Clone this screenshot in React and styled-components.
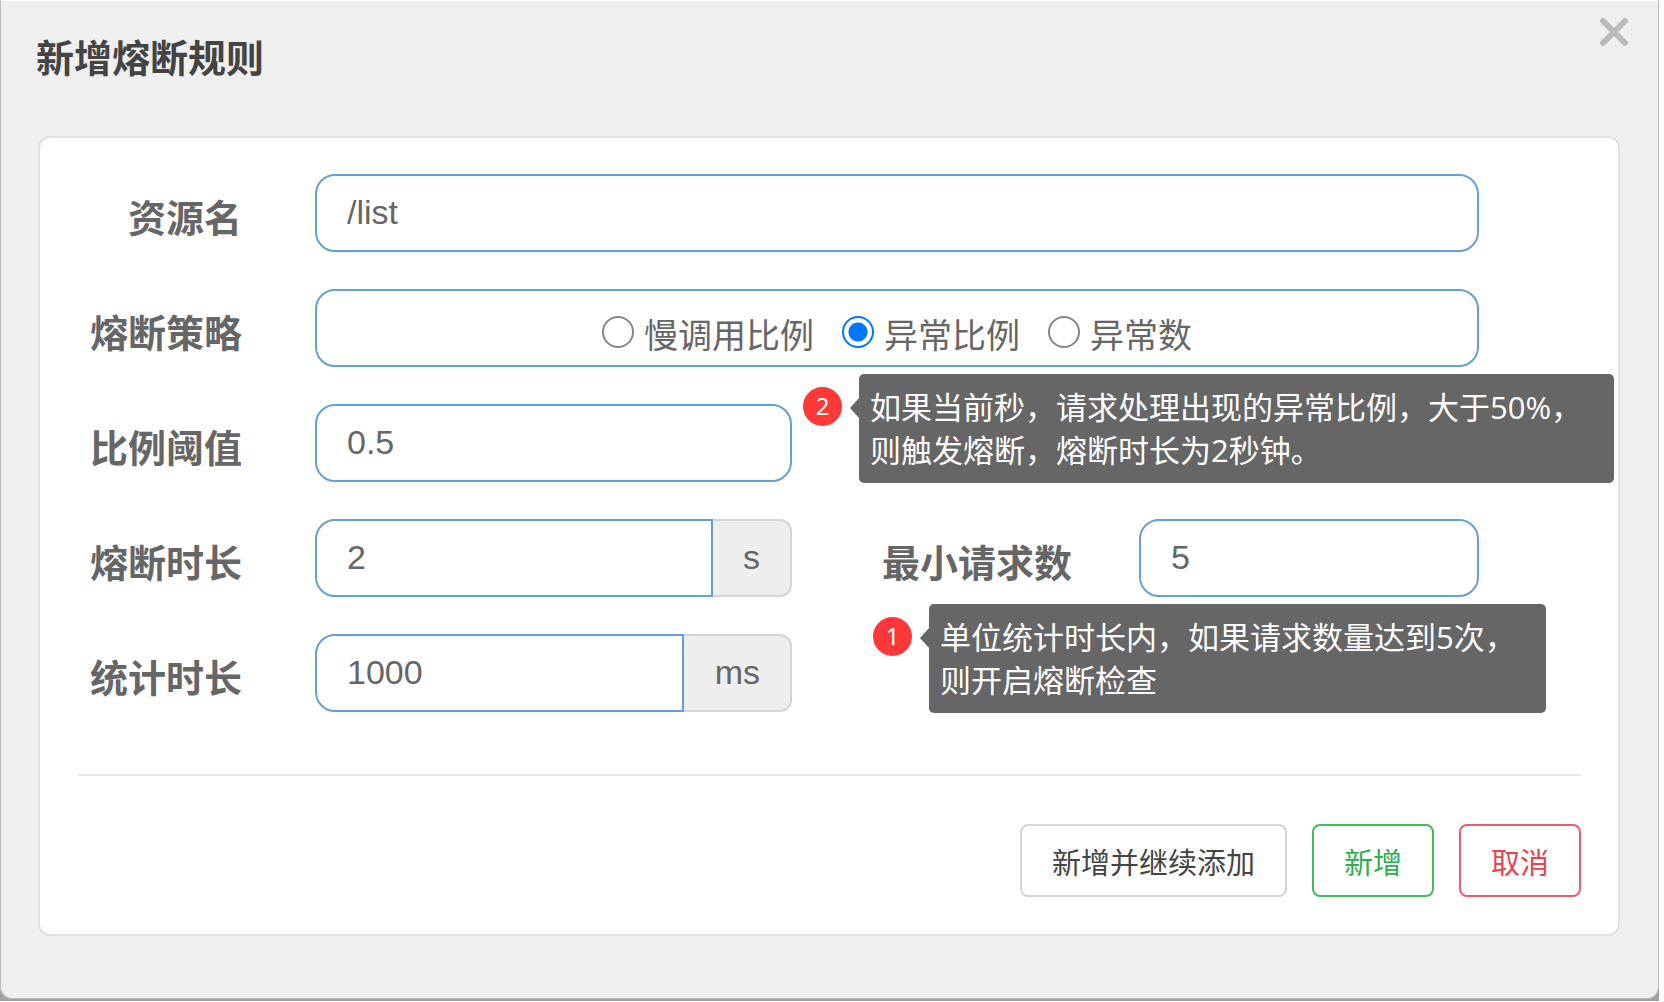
import React, { useState } from "react";
import styled, { createGlobalStyle } from "styled-components";

const GlobalStyle = createGlobalStyle`
  * {
    box-sizing: border-box;
  }
  body {
    margin: 0;
    background-color: #fafbfe;
    font-family: "Liberation Sans", "Noto Sans CJK SC", sans-serif;
    color: #666;
  }
  #root {
    min-height: 100vh;
    display: flex;
  }
`;

const Backdrop = styled.div`
  flex: 1;
  display: flex;
  margin: 0 5px 1px 0;
  padding-bottom: 2px;
  background-color: #a2a2a2;
`;

const Dialog = styled.div`
  flex: 1;
  display: flex;
  flex-direction: column;
  padding: 0 38px 62px 37px;
  background-color: #efefef;
  border: 1px solid #bbb;
  border-top-color: #fff;
  border-radius: 0 0 12px 12px;
`;

const Header = styled.header`
  height: 135px;
  display: flex;
  justify-content: space-between;
  align-items: flex-start;
`;

const Title = styled.h1`
  margin: 36px 0 0 -2px;
  font-size: 38px;
  line-height: 44px;
  color: #444;
`;

const CloseButton = styled.button`
  margin: 16px -9px 0 0;
  padding: 0;
  width: 30px;
  height: 30px;
  border: none;
  background: none;
  color: #bbb;
  cursor: pointer;
  svg {
    display: block;
  }
`;

const Panel = styled.form`
  flex: 1;
  display: flex;
  flex-direction: column;
  padding: 36px 37px;
  background-color: #fff;
  border: 2px solid #e1e1e1;
  border-radius: 12px;
`;

const Fields = styled.div`
  display: flex;
  flex-direction: column;
  gap: 37px;
  padding-right: 102px;
`;

const Row = styled.div`
  display: grid;
  grid-template-columns: 165px 550px 1fr 407px;
  position: relative;
`;

const Label = styled.label`
  padding-top: 17px;
  text-align: right;
  font-size: 38px;
  line-height: 56px;
  font-weight: bold;
`;

const Control = styled.div`
  display: flex;
  margin-left: ${(props) => (props.$narrow ? "67px" : "73px")};
  grid-column: ${(props) => (props.$wide ? "2 / -1" : "auto")};
`;

const Input = styled.input`
  flex: 1;
  min-width: 0;
  height: 78px;
  padding: 0 30px 2px;
  border: 2px solid #66a0d0;
  border-radius: ${(props) => (props.$joined ? "20px 0 0 20px" : "20px")};
  background-color: #fff;
  color: #666;
  font-family: inherit;
  font-size: 34px;
  outline: none;
`;

const Unit = styled.span`
  width: ${(props) => props.$width};
  padding: 0 30px 2px 0;
  display: flex;
  align-items: center;
  justify-content: flex-end;
  border: 2px solid #d4d4d4;
  border-left: none;
  border-radius: 0 12px 12px 0;
  background-color: #eee;
  font-size: 34px;
`;

const RadioGroup = styled.div`
  flex: 1;
  height: 78px;
  padding-top: 10px;
  display: flex;
  align-items: center;
  justify-content: center;
  gap: 28px;
  border: 2px solid #66a0d0;
  border-radius: 20px;
`;

const RadioLabel = styled.label`
  display: flex;
  align-items: center;
  gap: 10px;
  font-size: 34px;
`;

const Radio = styled.input`
  appearance: none;
  flex: none;
  width: 32px;
  height: 32px;
  margin: 0 0 2px;
  border: 2px solid #858585;
  border-radius: 50%;
  background-color: #fff;
  &:checked {
    border-color: #0075ff;
    background: radial-gradient(circle, #0075ff 9px, #fff 10px);
  }
`;

const Note = styled.div`
  position: absolute;
  top: -30px;
  left: ${(props) => props.$left};
  display: flex;
  align-items: flex-start;
`;

const Badge = styled.span`
  width: 39px;
  height: 39px;
  margin: 13px 17px 0 0;
  border-radius: 50%;
  background-color: #fd3838;
  color: #fff;
  font-family: "Noto Sans", sans-serif;
  font-size: 24px;
  line-height: 38px;
  text-align: center;
`;

const Bubble = styled.p`
  position: relative;
  width: ${(props) => props.$width};
  margin: 0;
  padding: 12px 11px 11px;
  border-radius: 5px;
  background-color: #666;
  color: #fff;
  font-family: "Open Sans", "Noto Sans CJK SC", sans-serif;
  font-size: 31px;
  line-height: 43px;
  white-space: nowrap;
  &::before {
    content: "";
    position: absolute;
    left: -9px;
    top: 24px;
    border: solid transparent;
    border-width: 10px 9px 10px 0;
    border-right-color: #666;
  }
`;

const Footer = styled.footer`
  margin-top: 62px;
  padding-top: 48px;
  display: flex;
  justify-content: flex-end;
  gap: 25px;
  border-top: 2px solid #e8e8e8;
`;

const Button = styled.button`
  height: 73px;
  padding: 0 30px;
  border: 2px solid ${(props) => props.$border};
  border-radius: 8px;
  background-color: #fff;
  color: ${(props) => props.$color};
  font-family: inherit;
  font-size: 29px;
  cursor: pointer;
`;

const strategies = ["慢调用比例", "异常比例", "异常数"];

export default function App() {
  const [strategy, setStrategy] = useState("异常比例");

  return (
    <Backdrop>
      <GlobalStyle />
      <Dialog role="dialog" aria-labelledby="title">
        <Header>
          <Title id="title">新增熔断规则</Title>
          <CloseButton type="button" aria-label="关闭">
            <svg
              width="30"
              height="30"
              viewBox="0 0 30 30"
              stroke="currentColor"
              strokeWidth="6"
              strokeLinecap="round"
            >
              <path d="M4 4L26 26M26 4L4 26" />
            </svg>
          </CloseButton>
        </Header>
        <Panel onSubmit={(e) => e.preventDefault()}>
          <Fields>
            <Row>
              <Label htmlFor="resource">资源名</Label>
              <Control $wide>
                <Input id="resource" defaultValue="/list" />
              </Control>
            </Row>
            <Row>
              <Label as="span" id="strategy">熔断策略</Label>
              <Control $wide>
                <RadioGroup role="radiogroup" aria-labelledby="strategy">
                  {strategies.map((name) => (
                    <RadioLabel key={name}>
                      <Radio
                        type="radio"
                        name="strategy"
                        checked={strategy === name}
                        onChange={() => setStrategy(name)}
                      />
                      {name}
                    </RadioLabel>
                  ))}
                </RadioGroup>
              </Control>
            </Row>
            <Row>
              <Label htmlFor="threshold">比例阈值</Label>
              <Control>
                <Input id="threshold" defaultValue="0.5" />
              </Control>
              <Note $left="726px">
                <Badge>2</Badge>
                <Bubble $width="755px">
                  如果当前秒，请求处理出现的异常比例，大于50%，
                  <br />
                  则触发熔断，熔断时长为2秒钟。
                </Bubble>
              </Note>
            </Row>
            <Row>
              <Label htmlFor="duration">熔断时长</Label>
              <Control>
                <Input id="duration" defaultValue="2" $joined />
                <Unit $width="79px">s</Unit>
              </Control>
              <Label htmlFor="minRequest">最小请求数</Label>
              <Control $narrow>
                <Input id="minRequest" defaultValue="5" />
              </Control>
            </Row>
            <Row>
              <Label htmlFor="interval">统计时长</Label>
              <Control>
                <Input id="interval" defaultValue="1000" $joined />
                <Unit $width="108px">ms</Unit>
              </Control>
              <Note $left="796px">
                <Badge>1</Badge>
                <Bubble $width="617px">
                  单位统计时长内，如果请求数量达到5次，
                  <br />
                  则开启熔断检查
                </Bubble>
              </Note>
            </Row>
          </Fields>
          <Footer>
            <Button type="button" $border="#d4d4d4" $color="#444">新增并继续添加</Button>
            <Button type="submit" $border="#45b95e" $color="#2fae50">新增</Button>
            <Button type="button" $border="#e8606d" $color="#e24453">取消</Button>
          </Footer>
        </Panel>
      </Dialog>
    </Backdrop>
  );
}
